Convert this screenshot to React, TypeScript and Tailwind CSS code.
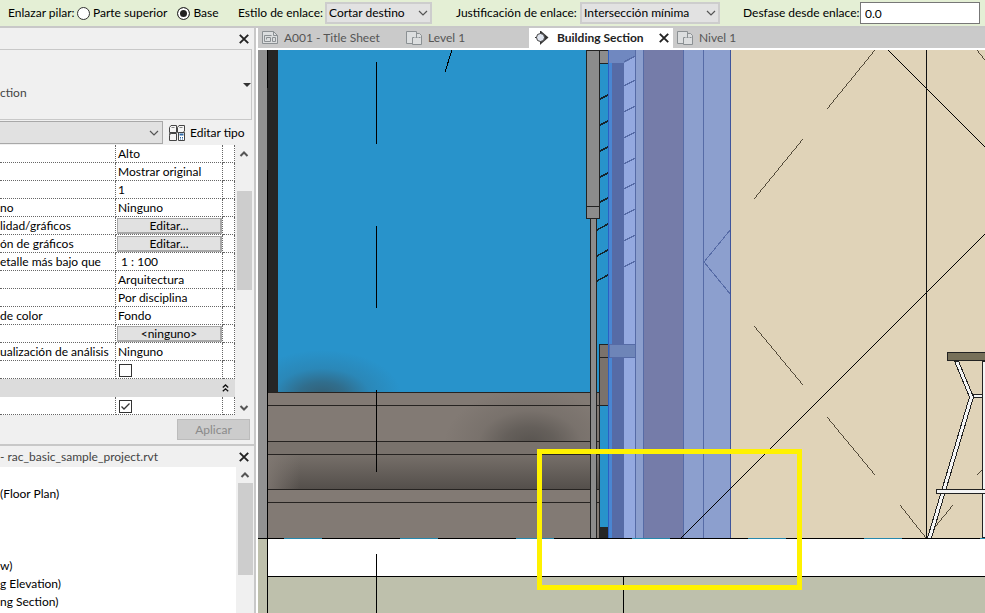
import type { ReactNode } from "react";
import { clsx } from "clsx";

const CloseIcon = () => (
  <svg viewBox="0 0 10 10" className="size-[10px]" aria-hidden="true">
    <path d="M.8 .8L9.2 9.2M9.2 .8L.8 9.2" stroke="#222" strokeWidth="1.9" />
  </svg>
);

const Chevron = ({ up = false, bold = false }: { up?: boolean; bold?: boolean }) => (
  <svg
    viewBox="0 0 10 6"
    className="pointer-events-none h-[6px] w-[10px] shrink-0"
    fill="none"
    stroke="#555"
    strokeWidth={bold ? 2 : 1.2}
    aria-hidden="true"
  >
    <path d={up ? "M1.5 5L5 1.5L8.5 5" : bold ? "M1.5 1L5 4.5L8.5 1" : "M1 1L5 5L9 1"} />
  </svg>
);

const SheetIcon = () => (
  <svg viewBox="0 0 16 14" className="h-[14px] w-4" fill="none" stroke="#8b9093" aria-hidden="true">
    <path d="M.5 .5H11.5L15.5 4.5V12.5H.5Z" fill="#dcdedf" />
    <path d="M11.5 .5V4.5H15.5M2.5 4.5H9.5M2.5 4.5V10.5H8.5V6.5H4.5V8.5M10.5 6.5H13.5V10.5H10.5Z" />
  </svg>
);

const PlanIcon = () => (
  <svg viewBox="0 0 16 14" className="h-[14px] w-4" fill="none" stroke="#8b9093" aria-hidden="true">
    <path d="M.5 .5H10.5V2.5H13.5L15.5 4.5V13.5H6.5V12.5H.5Z" fill="#dcdedf" />
    <path d="M10.5 1V6M6.5 13V6.5" />
    <path d="M6.5 6.5H15" strokeDasharray="2 1" />
  </svg>
);

const SectionIcon = () => (
  <svg viewBox="0 0 14 14" className="mx-0.5 size-[14px]" aria-hidden="true">
    <path d="M6 0L13.5 6.5L6 13Z" fill="#333" />
    <circle cx="5.5" cy="6.5" r="4" fill="#dfe4ee" stroke="#444" />
    <path d="M5.5 0V2.5M5.5 10.5V13.5M0 6.5H1.5" stroke="#333" />
  </svg>
);

const EditTypeIcon = () => (
  <svg viewBox="0 0 16 16" className="size-4" fill="none" stroke="#444" aria-hidden="true">
    <path d="M.5 2.5L2 .5H7.5V7.5H.5ZM8.5 2.5L10 .5H15.5V6L14 7.5H8.5ZM.5 8.5H7.5V15.5H.5Z" fill="#f5f5f5" />
    <path d="M.5 10.5L2 8.5M2.5 2.5H5.5M10.5 2.5H13.5" stroke="#888" />
    <path d="M9.5 7.5H15.5V15.5H9.5Z" fill="#fff" />
    <path d="M10.5 9.5H14.5" stroke="#2c69a8" strokeWidth="2" />
    <path d="M11 12.5H12M13 12.5H14M11 14H12M13 14H14" stroke="#2c69a8" />
  </svg>
);

const Radio = ({ label, checked = false }: { label: string; checked?: boolean }) => (
  <label className="flex items-center gap-[3px] whitespace-nowrap">
    <input
      type="radio"
      name="enlazar"
      defaultChecked={checked}
      className="size-[13px] appearance-none rounded-full border border-[#333] bg-white checked:bg-[#222] checked:shadow-[inset_0_0_0_2px_white]"
    />
    {label}
  </label>
);

const Dropdown = ({ id, value, className }: { id: string; value: string; className: string }) => (
  <div className={clsx("relative flex h-[22px] items-center", className)}>
    <select
      id={id}
      className="h-full w-full appearance-none border-2 border-[#cdcdcd] bg-[#e2e2e2] pl-0.5 text-xs"
    >
      <option>{value}</option>
    </select>
    <span className="pointer-events-none absolute right-1 flex">
      <Chevron />
    </span>
  </div>
);

const OptionsBar = () => (
  <div className="flex h-[28px] shrink-0 items-center overflow-hidden whitespace-nowrap border-b-2 border-[#c8c8c8] bg-[#e4efd5] pl-2">
    <fieldset className="flex w-[230px] shrink-0 items-center">
      <span className="w-[69px]">Enlazar pilar:</span>
      <div className="flex gap-2.5">
        <Radio label="Parte superior" />
        <Radio label="Base" checked />
      </div>
    </fieldset>
    <div className="flex w-[218px] shrink-0 items-center">
      <label htmlFor="estilo" className="w-[87px]">
        Estilo de enlace:
      </label>
      <Dropdown id="estilo" value="Cortar destino" className="w-[107px]" />
    </div>
    <div className="flex w-[287px] shrink-0 items-center">
      <label htmlFor="justificacion" className="w-[124px]">
        Justificación de enlace:
      </label>
      <Dropdown id="justificacion" value="Intersección mínima" className="w-[140px]" />
    </div>
    <div className="flex shrink-0 items-center">
      <label htmlFor="desfase" className="w-[117px]">
        Desfase desde enlace:
      </label>
      <input
        id="desfase"
        defaultValue="0.0"
        className="h-[22px] w-[120px] border border-[#777] bg-white px-1 text-xs"
      />
    </div>
  </div>
);

type Row = { label?: string; value?: string; kind?: "text" | "button" | "check" | "checked" | "group" };

const rows: Row[] = [
  { value: "Alto" },
  { value: "Mostrar original" },
  { value: "1" },
  { label: "no", value: "Ninguno" },
  { label: "lidad/gráficos", value: "Editar...", kind: "button" },
  { label: "ón de gráficos", value: "Editar...", kind: "button" },
  { label: "etalle más bajo que", value: " 1 : 100" },
  { value: "Arquitectura" },
  { value: "Por disciplina" },
  { label: "de color", value: "Fondo" },
  { value: "<ninguno>", kind: "button" },
  { label: "ualización de análisis", value: "Ninguno" },
  { kind: "check" },
  { kind: "group" },
  { kind: "checked" },
];

const PropertyValue = ({ row }: { row: Row }) => {
  if (row.kind === "button") {
    return (
      <button className="block h-4 w-full border border-r-2 border-b-2 border-[#a8a8a8] bg-[#e1e1e1] leading-[13px]">
        {row.value}
      </button>
    );
  }
  if (row.kind === "check" || row.kind === "checked") {
    return (
      <span className="relative mt-0.5 ml-0.5 block size-[13px]">
        <input
          type="checkbox"
          aria-label="Valor"
          defaultChecked={row.kind === "checked"}
          className="peer block size-[13px] appearance-none border border-[#333] bg-white"
        />
        <svg
          viewBox="0 0 13 13"
          className="pointer-events-none absolute inset-0 hidden peer-checked:block"
          fill="none"
          stroke="#333"
          strokeWidth="1.3"
        >
          <path d="M2.5 6.5L5 9L10.5 3.5" />
        </svg>
      </span>
    );
  }
  return <span className="block whitespace-pre pl-px">{row.value}</span>;
};

const Scrollbar = ({ space, thumb, down = false }: { space: string; thumb: string; down?: boolean }) => (
  <div className="flex w-[18px] shrink-0 flex-col items-center bg-[#f0f0f0]">
    <div className={clsx("flex shrink-0 items-center", space)}>
      <Chevron up bold />
    </div>
    <div className={clsx("w-[15px] bg-[#cdcdcd]", thumb)} />
    {down && (
      <div className="mt-auto flex h-[14px] items-center">
        <Chevron bold />
      </div>
    )}
  </div>
);

const PaneHeader = ({ children }: { children?: ReactNode }) => (
  <div className="flex h-[21px] shrink-0 items-center justify-between pr-[5px] text-[#444]">
    <span>{children}</span>
    <button aria-label="Cerrar">
      <CloseIcon />
    </button>
  </div>
);

const Properties = () => (
  <section className="shrink-0 border-b-2 border-[#c8c8c8] pb-1">
    <PaneHeader />
    <button className="mr-[3px] flex h-[71px] w-[252px] items-center justify-between border border-l-0 border-[#c8c8c8] text-left text-[#444]">
      <span className="pt-4">ction</span>
      <svg viewBox="0 0 8 4" className="h-1 w-2" aria-hidden="true">
        <path d="M0 0H8L4 4Z" fill="#333" />
      </svg>
    </button>
    <div className="flex h-[25px] items-center gap-1.5">
      <div className="relative flex h-[23px] w-[163px] items-center">
        <select
          aria-label="Tipo"
          className="h-full w-full appearance-none border border-l-0 border-[#a8a8a8] bg-[#e1e1e1]"
        />
        <span className="pointer-events-none absolute right-1 flex">
          <Chevron />
        </span>
      </div>
      <button className="flex items-center gap-[5px] whitespace-nowrap">
        <EditTypeIcon />
        Editar tipo
      </button>
    </div>
    <div className="flex">
      <table className="w-[235px] table-fixed border-separate border-spacing-0 bg-white">
        <colgroup>
          <col className="w-[116px]" />
          <col className="w-[107px]" />
          <col className="w-[12px]" />
        </colgroup>
        <tbody>
          {rows.map((row, index) =>
            row.kind === "group" ? (
              <tr key={index} className="h-[18px]">
                <td colSpan={3} className="bg-[#dcdcdc] p-0">
                  <button aria-label="Contraer grupo" className="ml-auto mr-1.5 block">
                    <svg viewBox="0 0 7 8" className="h-2 w-[7px]" fill="none" stroke="#111" strokeWidth="1.3">
                      <path d="M.8 3.5L3.5 1L6.2 3.5M.8 7.3L3.5 4.8L6.2 7.3" />
                    </svg>
                  </button>
                </td>
              </tr>
            ) : (
              <tr key={index} className="h-[18px] leading-4">
                <td className="overflow-hidden whitespace-nowrap border-r border-b border-dotted border-[#666] p-0">
                  {row.label}
                </td>
                <td className="overflow-hidden whitespace-nowrap border-r border-b border-dotted border-[#666] p-0 pl-px">
                  <PropertyValue row={row} />
                </td>
                <td className="border-r border-b border-dotted border-[#666] p-0" />
              </tr>
            )
          )}
        </tbody>
      </table>
      <Scrollbar space="h-[46px] pb-7" thumb="h-[99px]" down />
    </div>
    <button
      disabled
      className="mt-1 ml-auto mr-1 block h-[21px] w-[73px] border border-[#bcbcbc] bg-[#cccccc] text-[#8a8a8a]"
    >
      Aplicar
    </button>
  </section>
);

const views = ["", "(Floor Plan)", "", "", "", "w)", "g Elevation)", "ng Section)"];

const Browser = () => (
  <section className="flex min-h-0 flex-1 flex-col">
    <PaneHeader>- rac_basic_sample_project.rvt</PaneHeader>
    <div className="flex min-h-0 flex-1">
      <ul className="flex-1 overflow-hidden bg-white">
        {views.map((view, index) => (
          <li key={index} className="h-[18px] leading-[18px]">
            {view}
          </li>
        ))}
      </ul>
      <Scrollbar space="h-4" thumb="h-[92px]" />
    </div>
  </section>
);

const tabs = [
  { name: "A001 - Title Sheet", icon: <SheetIcon />, width: "w-36" },
  { name: "Level 1", icon: <PlanIcon />, width: "w-[127px]" },
  { name: "Building Section", icon: <SectionIcon />, width: "w-36", active: true },
  { name: "Nivel 1", icon: <PlanIcon />, width: "w-36" },
];

const ViewTabs = () => (
  <div className="flex h-[22px] shrink-0 border-b-2 border-white bg-[#cacaca]">
    {tabs.map((tab) => (
      <div
        key={tab.name}
        className={clsx(
          "flex shrink-0 items-center justify-between px-1 whitespace-nowrap",
          tab.width,
          tab.active ? "bg-white font-bold text-[#222]" : "text-[#555]"
        )}
      >
        <button className="flex items-center gap-1.5">
          {tab.icon}
          {tab.name}
        </button>
        {tab.active && (
          <button aria-label="Cerrar vista">
            <CloseIcon />
          </button>
        )}
      </div>
    ))}
  </div>
);

// left end of each louver blade, outer side then glass side
const outerLouvers = [99, 125, 151, 177, 202, 230, 256, 281];
const innerLouvers = [62, 86, 112, 138, 164, 189, 215, 241, 267];
const floorDashes = [284, 400, 516, 632, 748, 864, 980];

const Drawing = () => (
  <svg
    viewBox="258 50 727 563"
    preserveAspectRatio="xMinYMin slice"
    className="block min-h-0 w-full flex-1"
    shapeRendering="crispEdges"
    role="img"
    aria-label="Building Section"
  >
    <defs>
      <radialGradient id="shade">
        <stop offset="0" stopColor="#3c3a37" stopOpacity=".6" />
        <stop offset=".3" stopColor="#3c3a37" stopOpacity=".42" />
        <stop offset=".6" stopColor="#3c3a37" stopOpacity=".13" />
        <stop offset="1" stopColor="#3c3a37" stopOpacity="0" />
      </radialGradient>
      <linearGradient id="tread" x2="0" y2="1">
        <stop offset="0" stopColor="#77706a" />
        <stop offset="1" stopColor="#544f4b" />
      </linearGradient>
      <linearGradient id="treadEnd">
        <stop offset="0" stopColor="#827a74" stopOpacity=".8" />
        <stop offset="1" stopColor="#827a74" stopOpacity="0" />
      </linearGradient>
      <clipPath id="sky">
        <path d="M278 50H590V392H278Z" />
      </clipPath>
      <clipPath id="riser">
        <path d="M268 393H600V441H268Z" />
      </clipPath>
    </defs>

    {/* exterior */}
    <path fill="#2893cb" d="M278 50H612V538H278Z" />
    <path fill="#929292" d="M258 50H267V538H258Z" />
    <path fill="#262626" d="M267 50H278V392H267Z" />
    <ellipse cx="322" cy="396" rx="80" ry="46" fill="url(#shade)" clipPath="url(#sky)" />

    {/* steps */}
    <path fill="#827a74" d="M268 392H600V538H268Z" />
    <ellipse cx="530" cy="444" rx="86" ry="56" fill="url(#shade)" clipPath="url(#riser)" />
    <path fill="#79726c" d="M268 442H600V454H268Z" />
    <path fill="url(#tread)" d="M268 454H600V489H268Z" />
    <path fill="url(#treadEnd)" d="M268 454H300V489H268Z" />
    <path
      stroke="#262321"
      d="M268 392.5H600M268 405.5H600M268 441.5H600M268 454.5H600M268 489.5H600M268 502.5H600"
    />

    {/* frame */}
    <path fill="#8c8c8c" stroke="#222" d="M586.5 50.5H599.5V218.5H586.5ZM586.5 206.5H599.5M590.5 218.5H596.5V538H590.5Z" />
    <path fill="#8c8c8c" stroke="#222" d="M599.5 50.5H609V63.5H599.5Z" />
    <path fill="#7a726c" stroke="#222" d="M599.5 344.5H612V405.5H599.5ZM599.5 357.5H610" />
    <path stroke="#222" d="M599.5 344V538" />
    <path fill="#262626" d="M600 527H609V538H600Z" />
    {outerLouvers.map((y) => (
      <path key={y} stroke="#16242c" strokeWidth="1.5" d={y > 220 ? `M597 ${y}L608 ${y - 6}` : `M600 ${y}L608 ${y - 4}`} />
    ))}

    {/* selected wall */}
    <path fill="#4a86d2" d="M609 50H612V538H609Z" />
    <path fill="#566ba6" d="M612 50H624V538H612Z" />
    <path fill="#94a9e0" d="M624 50H635V538H624Z" />
    <path fill="#8c9fce" d="M635 50H731V538H635Z" />
    <path fill="#757ca9" d="M644 50H683V538H644Z" />
    <path fill="#7088c0" d="M609 50H635V57L624 63H609Z" />
    <path fill="#6e85b8" stroke="#566ba6" d="M609 344.5H635V357.5H609Z" />
    {innerLouvers.map((y) => (
      <path key={y} stroke="#566ba6" strokeWidth="1.3" d={`M624 ${y}L635 ${y - 6}`} />
    ))}
    <path stroke="#566ba6" d="M635.5 50V538M643.5 50V538M683.5 50V538M703.5 50V538" />
    <path stroke="#566ba6" fill="none" d="M731 229L704 262L731 295" />
    <path stroke="#2b5fc4" d="M608.5 50V538" />

    {/* interior */}
    <path fill="#e0d3b8" d="M731 50H985V538H731Z" />
    <path stroke="#3f559c" d="M730.5 50V538" />
    <path
      stroke="#2e2718"
      strokeWidth=".8"
      d="M875 50L827 109M803 139L754 199M754 326L803 385M827 417L875 475M900 505L926 538M953 505L926 538M977 50L985 60M977 475L985 467"
    />
    <path stroke="#000" d="M888 50L985 147M681 538L985 234M452 50L445 72" />
    <path stroke="#111" d="M926.5 50V538" />

    {/* table */}
    <g fill="#f4f4f4" stroke="#222">
      <path d="M954.5 361L969.5 397L927.5 538H931.5L973.5 397L958.5 361Z" />
      <path d="M973 394.5H985V397.5H973Z" />
      <path d="M986 361H982.5V537.5H986" />
      <path d="M936.5 489.5H986V493.5H936.5Z" />
      <path fill="#777059" d="M947.5 352.5H986V360.5H947.5Z" />
    </g>

    {/* slab and ground */}
    <path fill="#fff" d="M268 539H985V576H268Z" />
    <path fill="#bec0ac" d="M258 539H267V577H985V613H258Z" />
    <path stroke="#000" fill="none" d="M258 538.5H985M268 576.5H985M267.5 50V88M267.5 170V613M623.5 577V613" />
    {floorDashes.map((x) => (
      <path key={x} stroke="#2688ad" d={`M${x} 538.5h38`} />
    ))}
    <path stroke="#000" d="M376.5 62V144M376.5 226V308M376.5 390V472M376.5 554V613" />

    {/* highlighted area */}
    <path fill="none" stroke="#fff200" strokeWidth="5" d="M539.5 451.5H799.5V587.5H539.5Z" />
  </svg>
);

const App = () => {
  return (
    <div className="flex h-screen flex-col overflow-hidden bg-[#f0f0f0] font-['Lato','Noto_Sans',sans-serif] text-xs text-black">
      <OptionsBar />
      <div className="flex min-h-0 flex-1">
        <aside className="flex w-[256px] shrink-0 flex-col overflow-hidden border-r-2 border-[#c8c8c8]">
          <Properties />
          <Browser />
        </aside>
        <main className="flex min-w-0 flex-1 flex-col border-l-2 border-white">
          <ViewTabs />
          <Drawing />
        </main>
      </div>
    </div>
  );
};

export default App;
